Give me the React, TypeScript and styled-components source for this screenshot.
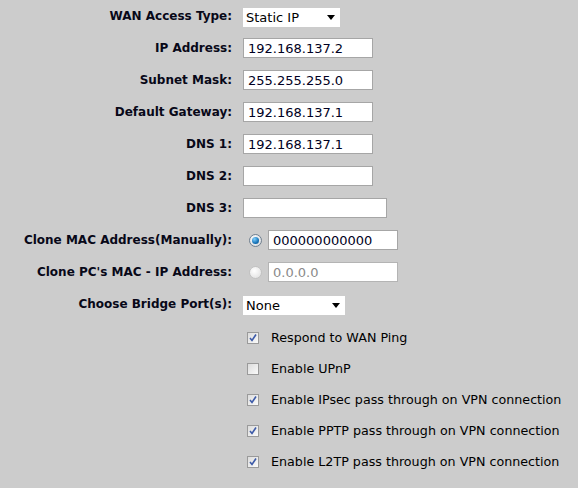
import React from 'react';
import styled, { createGlobalStyle } from 'styled-components';

const GlobalStyle = createGlobalStyle`
  html, body {
    margin: 0;
    padding: 0;
    background: #cccccc;
  }
  body {
    font-family: 'DejaVu Sans', Verdana, sans-serif;
    font-size: 12.7px;
    color: #000;
  }
`;

const Form = styled.div`
  width: 578px;
  height: 488px;
  background: #cccccc;
`;

const Row = styled.div<{ h: number }>`
  display: grid;
  grid-template-columns: 232px 1fr;
  column-gap: 11px;
  align-items: center;
  height: ${props => props.h}px;
`;

const Label = styled.div`
  text-align: right;
  font-weight: bold;
  font-size: 12px;
  color: #080818;
  white-space: nowrap;
`;

const Field = styled.div<{ indent?: number }>`
  display: flex;
  align-items: center;
  gap: 6px;
  padding-left: ${props => props.indent || 0}px;
`;

const TextBox = styled.input<{ w: number }>`
  box-sizing: border-box;
  width: ${props => props.w}px;
  height: 20px;
  margin: 0;
  padding: 0 4px;
  border: 1px solid #a6a6a6;
  background: #fff;
  font-family: 'DejaVu Sans', Verdana, sans-serif;
  font-size: 13px;
  color: #000022;
  outline: none;
  &:disabled {
    color: #8a8a8a;
    border-color: #b4b4b4;
    background: #fff;
  }
`;

const Select = styled.div<{ w: number }>`
  box-sizing: border-box;
  display: flex;
  align-items: center;
  justify-content: space-between;
  width: ${props => props.w}px;
  height: 19px;
  margin-top: 3px;
  padding: 0 5px 0 3px;
  background: #fff;
  font-size: 13px;
  white-space: nowrap;
`;

const Arrow = styled.span`
  width: 0;
  height: 0;
  border-left: 4px solid transparent;
  border-right: 4px solid transparent;
  border-top: 5px solid #000;
`;

const Radio = styled.span<{ on?: boolean }>`
  box-sizing: border-box;
  display: inline-flex;
  align-items: center;
  justify-content: center;
  width: 13px;
  height: 13px;
  border-radius: 50%;
  border: 1px solid ${props => (props.on ? '#6f7f8f' : '#c2c2c2')};
  background: ${props =>
    props.on
      ? 'radial-gradient(circle at 40% 35%, #ffffff, #d0d4d8)'
      : 'radial-gradient(circle at 40% 35%, #ffffff, #dcdcdc)'};
  &::after {
    content: '';
    display: ${props => (props.on ? 'block' : 'none')};
    width: 7px;
    height: 7px;
    border-radius: 50%;
    background: radial-gradient(circle at 35% 30%, #7fd0ff, #1874b8 60%, #0b4f86);
  }
`;

const Options = styled.div`
  padding-top: 2px;
`;

const Check = styled.span`
  box-sizing: border-box;
  display: inline-flex;
  align-items: center;
  justify-content: center;
  width: 12px;
  height: 12px;
  margin-left: 4px;
  margin-right: 6px;
  border: 1px solid #9a9a9a;
  background: linear-gradient(135deg, #dcdcdc, #fafafa);
`;

const CheckLabel = styled.span`
  white-space: nowrap;
`;

const Tick = () => (
  <svg width="10" height="10" viewBox="0 0 10 10">
    <path d="M2 5 L4 7.5 L8 1.5" fill="none" stroke="#3c5aa8" strokeWidth="1.6" />
  </svg>
);

type FieldRow = { label: string; value: string; width?: number };

const addressRows: FieldRow[] = [
  { label: 'IP Address:', value: '192.168.137.2' },
  { label: 'Subnet Mask:', value: '255.255.255.0' },
  { label: 'Default Gateway:', value: '192.168.137.1' },
  { label: 'DNS 1:', value: '192.168.137.1' },
  { label: 'DNS 2:', value: '' },
  { label: 'DNS 3:', value: '', width: 144 },
];

const options = [
  { text: 'Respond to WAN Ping', checked: true },
  { text: 'Enable UPnP', checked: false },
  { text: 'Enable IPsec pass through on VPN connection', checked: true },
  { text: 'Enable PPTP pass through on VPN connection', checked: true },
  { text: 'Enable L2TP pass through on VPN connection', checked: true },
];

export default function App() {
  return (
    <>
      <GlobalStyle />
      <Form>
        <Row h={32}>
          <Label>WAN Access Type:</Label>
          <Field>
            <Select w={97}>
              Static IP
              <Arrow />
            </Select>
          </Field>
        </Row>
        {addressRows.map(r => (
          <Row h={32} key={r.label}>
            <Label>{r.label}</Label>
            <Field>
              <TextBox w={r.width || 130} defaultValue={r.value} readOnly />
            </Field>
          </Row>
        ))}
        <Row h={32}>
          <Label>Clone MAC Address(Manually):</Label>
          <Field indent={6}>
            <Radio on />
            <TextBox w={130} defaultValue="000000000000" readOnly />
          </Field>
        </Row>
        <Row h={32}>
          <Label>Clone PC's MAC - IP Address:</Label>
          <Field indent={6}>
            <Radio />
            <TextBox w={130} defaultValue="0.0.0.0" disabled />
          </Field>
        </Row>
        <Row h={32}>
          <Label>Choose Bridge Port(s):</Label>
          <Field>
            <Select w={102}>
              None
              <Arrow />
            </Select>
          </Field>
        </Row>
        <Options>
          {options.map(o => (
            <Row h={31} key={o.text}>
              <span />
              <Field>
                <Check>{o.checked && <Tick />}</Check>
                <CheckLabel>{o.text}</CheckLabel>
              </Field>
            </Row>
          ))}
        </Options>
      </Form>
    </>
  );
}
